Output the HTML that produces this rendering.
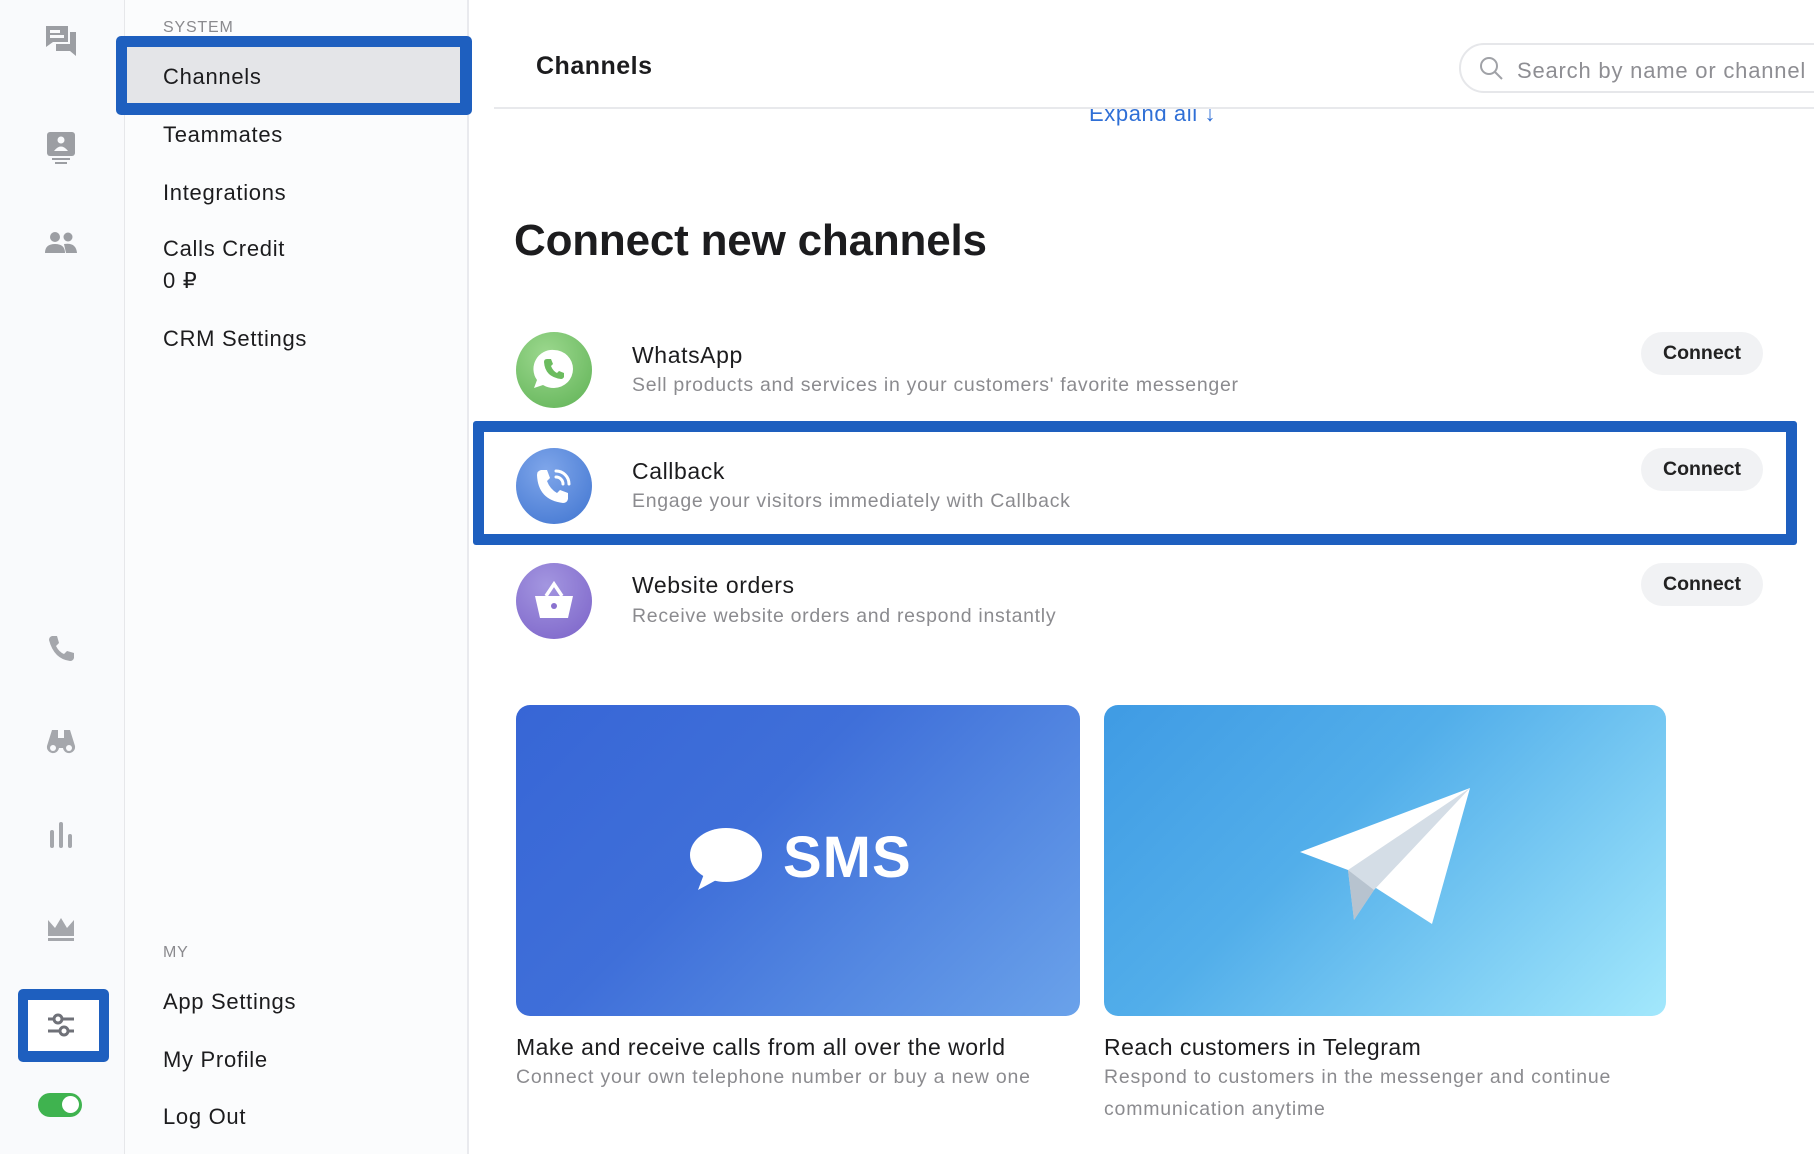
<!DOCTYPE html>
<html><head><meta charset="utf-8"><style>
*{margin:0;padding:0;box-sizing:border-box}
body{width:1814px;height:1154px;overflow:hidden;background:#fff;font-family:"Liberation Sans",sans-serif;color:#1c1c1e;position:relative}
.a{position:absolute}
.rail{left:0;top:0;width:125px;height:1154px;background:#f9fafc;border-right:1px solid #e6e7ea}
.sub{left:125px;top:0;width:344px;height:1154px;background:#fbfcfd;border-right:2px solid #e9eaee}
.mi{position:absolute;left:163px;font-size:22px;color:#1c1c1e;letter-spacing:.7px}
.lbl{position:absolute;left:163px;font-size:16px;color:#8a8a8e;letter-spacing:.8px}
.ic{position:absolute;left:44px;width:34px;height:34px}
.row-t{position:absolute;left:632px;font-size:23px;color:#1c1c1e;letter-spacing:.6px}
.row-d{position:absolute;left:632px;font-size:19.5px;color:#8b8b8f;letter-spacing:.7px}
.btn{position:absolute;left:1641px;width:122px;height:43px;border-radius:22px;background:#f1f2f4;font-size:19.5px;font-weight:bold;text-align:center;line-height:43px;color:#222}
.circ{position:absolute;left:516px;width:76px;height:76px;border-radius:50%}
.ct{position:absolute;font-size:23px;color:#1c1c1e;letter-spacing:.5px}
.cd{position:absolute;font-size:19.5px;color:#8b8b8f;letter-spacing:.8px;line-height:32px}
</style></head><body>
<div class="a rail"></div>
<div class="a sub"></div>

<svg class="ic" style="top:24px" viewBox="0 0 34 34"><path d="M2 2h22v16H9l-7 5z" fill="#9c9ea3"/><path d="M26 8h6v24l-6-5H12v-7h14z" fill="#9c9ea3"/><rect x="6" y="6" width="10" height="3" fill="#f9fafc"/><rect x="6" y="11" width="14" height="3" fill="#f9fafc"/></svg>
<svg class="ic" style="top:131px" viewBox="0 0 34 34"><rect x="3" y="1" width="28" height="24" rx="3" fill="#9c9ea3"/><circle cx="17" cy="9" r="3.5" fill="#f9fafc"/><path d="M10 20q7-9 14 0z" fill="#f9fafc"/><rect x="8" y="27" width="18" height="2" fill="#9c9ea3"/><rect x="11" y="31" width="12" height="2" fill="#9c9ea3"/></svg>
<svg class="ic" style="top:228px" viewBox="0 0 34 34"><circle cx="11" cy="9" r="5" fill="#9c9ea3"/><circle cx="24" cy="9" r="4.5" fill="#9c9ea3"/><path d="M1 25q0-9 10-9t10 9z" fill="#9c9ea3"/><path d="M20 16q12-2 13 9h-11z" fill="#9c9ea3"/></svg>
<svg class="ic" style="top:632px" viewBox="0 0 34 34"><path d="M8 4l5 0 2 7-3 3q3 6 8 8l3-3 7 2v5q-1 3-4 3Q10 27 5 8q0-3 3-4z" fill="#a5a7ac"/></svg>
<svg class="ic" style="top:724px" viewBox="0 0 34 34"><path d="M8 6h6v8h6V6h6l5 16a6 6 0 1 1-12 2h-4a6 6 0 1 1-12-2z" fill="#a5a7ac"/><circle cx="9" cy="24" r="3" fill="#f9fafc"/><circle cx="25" cy="24" r="3" fill="#f9fafc"/></svg>
<svg class="ic" style="top:818px" viewBox="0 0 34 34"><rect x="6" y="12" width="4" height="18" rx="2" fill="#a5a7ac"/><rect x="15" y="4" width="4" height="26" rx="2" fill="#a5a7ac"/><rect x="24" y="16" width="4" height="14" rx="2" fill="#a5a7ac"/></svg>
<svg class="ic" style="top:912px" viewBox="0 0 34 34"><path d="M4 8l7 8 6-10 6 10 7-8v16H4z" fill="#a5a7ac"/><rect x="4" y="26" width="26" height="3" fill="#a5a7ac"/></svg>
<div class="a" style="left:18px;top:989px;width:91px;height:73px;background:#1e5fbf;border-radius:5px"></div>
<div class="a" style="left:28px;top:1000px;width:71px;height:51px;background:#fff"></div>
<svg class="a" style="left:44px;top:1008px" width="34" height="34" viewBox="0 0 34 34"><path d="M4 11h26M4 23h26" stroke="#6f7178" stroke-width="3"/><circle cx="14" cy="11" r="4" fill="#fff" stroke="#6f7178" stroke-width="3"/><circle cx="20" cy="23" r="4" fill="#fff" stroke="#6f7178" stroke-width="3"/></svg>
<div class="a" style="left:38px;top:1093px;width:44px;height:24px;border-radius:12px;background:#3fb34f"></div>
<div class="a" style="left:62px;top:1096px;width:17px;height:17px;border-radius:50%;background:#fff"></div>

<div class="lbl" style="top:19px">SYSTEM</div>
<div class="a" style="left:116px;top:36px;width:356px;height:79px;background:#1e5fbf;border-radius:5px"></div>
<div class="a" style="left:127px;top:47px;width:333px;height:56px;background:#e4e5e8"></div>
<div class="mi" style="top:64px">Channels</div>
<div class="mi" style="top:122px">Teammates</div>
<div class="mi" style="top:180px">Integrations</div>
<div class="mi" style="top:236px">Calls Credit</div>
<div class="mi" style="top:268px">0 ₽</div>
<div class="mi" style="top:326px">CRM Settings</div>
<div class="lbl" style="top:944px">MY</div>
<div class="mi" style="top:989px">App Settings</div>
<div class="mi" style="top:1047px">My Profile</div>
<div class="mi" style="top:1104px">Log Out</div>

<div class="a" style="left:494px;top:0;width:1320px;height:109px;background:#fff;border-bottom:2px solid #e8e9ec;z-index:2"></div>
<div class="a" style="left:1089px;top:101px;font-size:22px;color:#2f6fd6;z-index:1;letter-spacing:.6px">Expand all ↓</div>
<div class="a" style="left:536px;top:52px;font-size:25px;font-weight:bold;z-index:3;letter-spacing:.5px">Channels</div>
<div class="a" style="left:1459px;top:43px;width:420px;height:50px;border:2px solid #e6e7ea;border-radius:25px;z-index:3;background:#fff"></div>
<svg class="a" style="left:1478px;top:55px;z-index:4" width="26" height="26" viewBox="0 0 26 26"><circle cx="11" cy="11" r="8" fill="none" stroke="#a0a2a7" stroke-width="2"/><path d="M17 17l7 7" stroke="#a0a2a7" stroke-width="2"/></svg>
<div class="a" style="left:1517px;top:58px;font-size:22px;color:#8e8e93;z-index:4;letter-spacing:.8px;white-space:nowrap">Search by name or channel</div>

<div class="a" style="left:514px;top:216px;font-size:44px;font-weight:bold;color:#1c1c1e;letter-spacing:-.2px">Connect new channels</div>

<div class="circ" style="top:332px;background:radial-gradient(circle at 40% 30%,#9cd88e,#5fb255)"></div>
<svg class="a" style="left:532px;top:347px" width="44" height="46" viewBox="0 0 44 46"><path d="M22 3a19 19 0 0 1 0 38q-6 0-11-3l-9 3 3-8A19 19 0 0 1 22 3z" fill="#fff"/><path d="M15 12l4 0 2 5-2 2q2 5 6 7l2-2 5 2v4q-1 2-3 2Q13 30 12 15q0-3 3-3z" fill="#6cbc5f"/></svg>
<div class="row-t" style="top:342px">WhatsApp</div>
<div class="row-d" style="top:374px">Sell products and services in your customers' favorite messenger</div>
<div class="btn" style="top:332px">Connect</div>

<div class="a" style="left:473px;top:421px;width:1324px;height:124px;background:#1e5fbf;border-radius:3px"></div>
<div class="a" style="left:484px;top:432px;width:1302px;height:102px;background:#fff"></div>
<div class="circ" style="top:448px;background:radial-gradient(circle at 40% 30%,#7fa6ea,#3f74d0)"></div>
<svg class="a" style="left:532px;top:464px" width="44" height="44" viewBox="0 0 44 44"><path d="M9 6l6 0 3 8-3 3q3 8 10 12l3-3 8 3v6q-1 4-5 4Q6 36 5 11q0-4 4-5z" fill="#fff"/><path d="M24 7a13 13 0 0 1 13 13M24 13a7 7 0 0 1 7 7" stroke="#fff" stroke-width="3" fill="none" stroke-linecap="round"/></svg>
<div class="row-t" style="top:458px">Callback</div>
<div class="row-d" style="top:490px">Engage your visitors immediately with Callback</div>
<div class="btn" style="top:448px">Connect</div>

<div class="circ" style="top:563px;background:radial-gradient(circle at 40% 30%,#a396e0,#7b62c8)"></div>
<svg class="a" style="left:532px;top:580px" width="44" height="44" viewBox="0 0 44 44"><path d="M14 16l8-12 8 12" stroke="#fff" stroke-width="3.5" fill="none"/><path d="M3 16h38l-5 22H8z" fill="#fff"/><circle cx="22" cy="26" r="3" fill="#8a72cf"/></svg>
<div class="row-t" style="top:572px">Website orders</div>
<div class="row-d" style="top:605px">Receive website orders and respond instantly</div>
<div class="btn" style="top:563px">Connect</div>

<div class="a" style="left:516px;top:705px;width:564px;height:311px;border-radius:14px;background:linear-gradient(135deg,#3766d6 0%,#3f6fd9 40%,#6aa2ea 100%)"></div>
<svg class="a" style="left:688px;top:824px" width="76" height="70" viewBox="0 0 76 70"><ellipse cx="38" cy="31" rx="36" ry="27" fill="#fff"/><path d="M16 50l-6 16 22-12z" fill="#fff"/></svg>
<div class="a" style="left:783px;top:824px;font-size:58px;font-weight:bold;color:#fff;letter-spacing:1px">SMS</div>
<div class="a" style="left:1104px;top:705px;width:562px;height:311px;border-radius:14px;background:linear-gradient(135deg,#3f9be4 0%,#52aeea 40%,#a3e8fc 100%)"></div>
<svg class="a" style="left:1298px;top:786px" width="174" height="146" viewBox="0 0 174 146"><path d="M172 2L2 66l48 18 84 54z" fill="#fff"/><path d="M172 2L50 84l6 50 20-30z" fill="#d4dde6"/><path d="M56 134l20-30-26-20z" fill="#b7c3cf"/></svg>
<div class="ct" style="left:516px;top:1034px">Make and receive calls from all over the world</div>
<div class="cd" style="left:516px;top:1061px">Connect your own telephone number or buy a new one</div>
<div class="ct" style="left:1104px;top:1034px">Reach customers in Telegram</div>
<div class="cd" style="left:1104px;top:1061px">Respond to customers in the messenger and continue<br>communication anytime</div>
</body></html>
